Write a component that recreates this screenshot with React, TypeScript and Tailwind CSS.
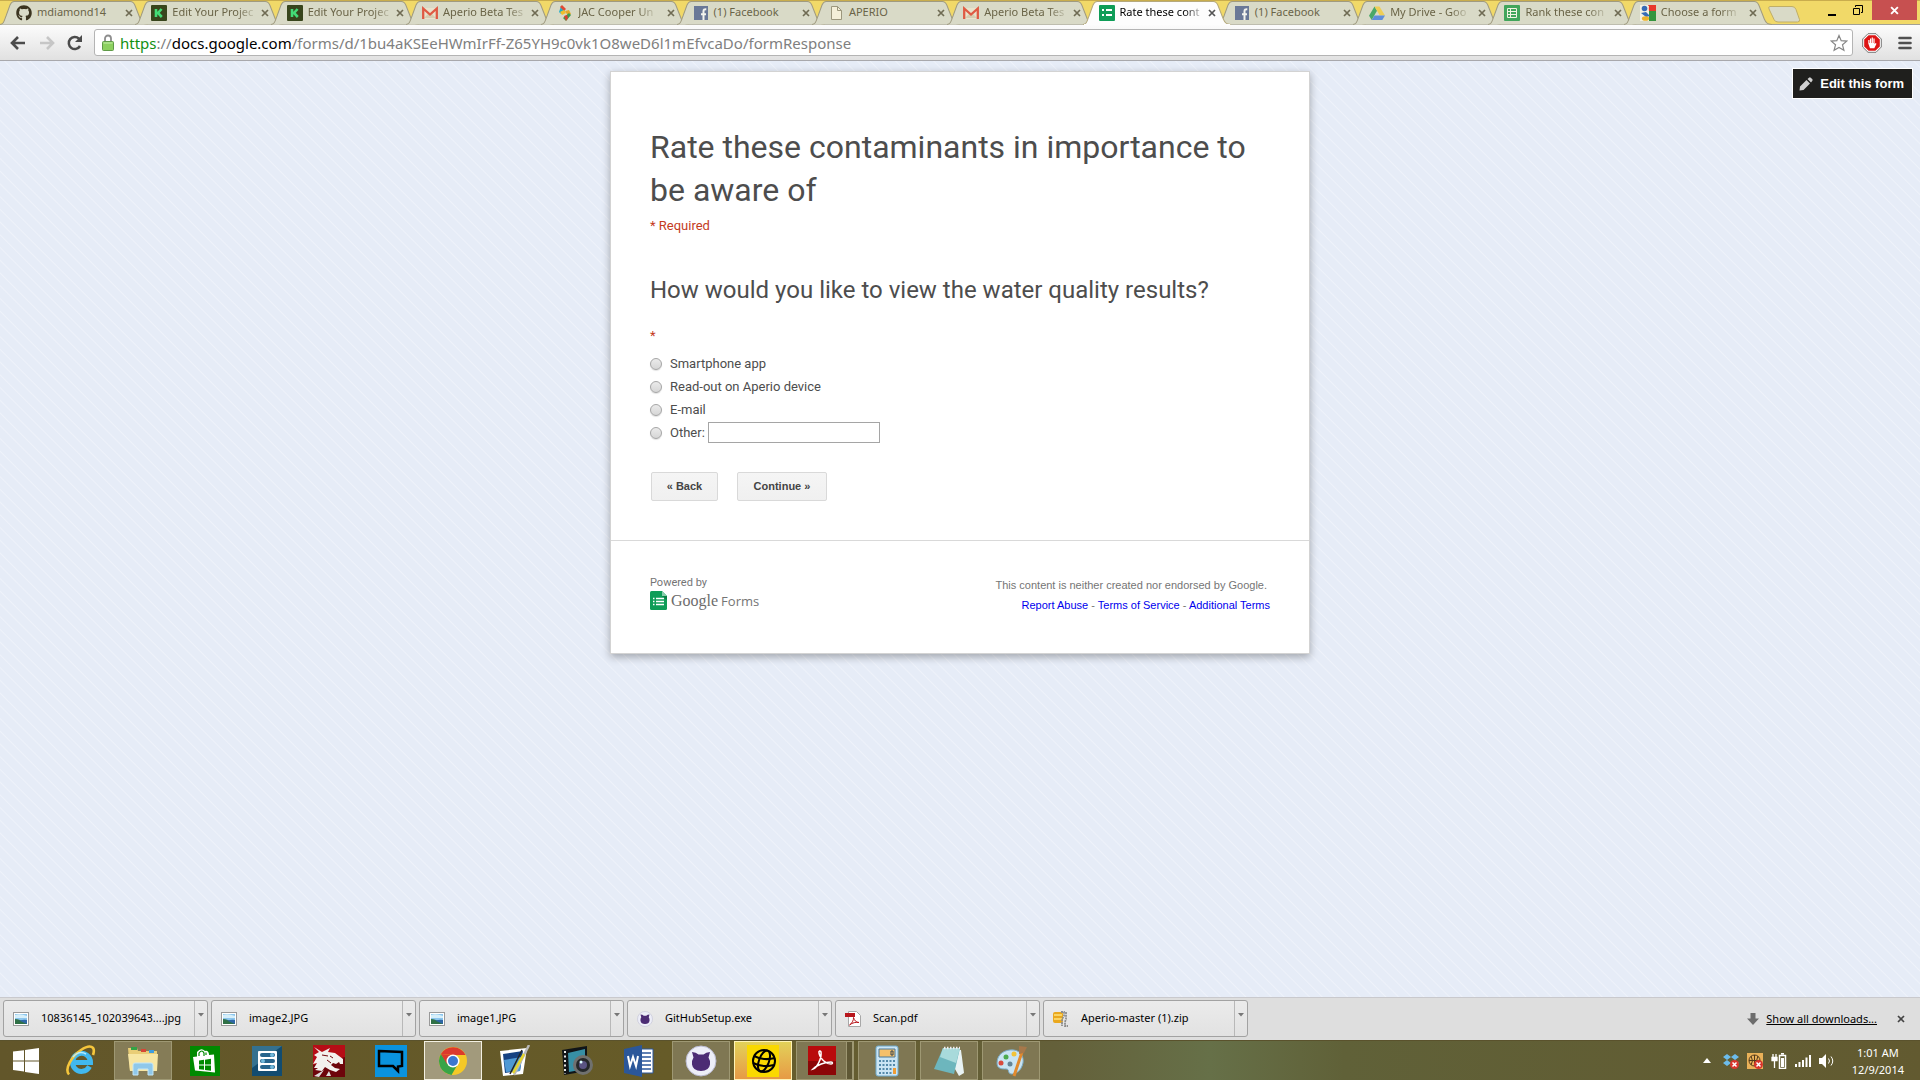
import React from "react";
import { FaGithub } from "react-icons/fa";

type IconProps = { className?: string };
type Svg = (p: IconProps) => React.ReactElement;

const Kick: Svg = () => (
  <svg viewBox="0 0 16 16" className="size-4"><rect width="16" height="16" rx="1" fill="#38451c" /><path d="M5 4v8M10.600 4 7 8l3.800 4" stroke="#43dc76" strokeWidth="2.600" fill="none" /></svg>
);
const Gmail: Svg = () => (
  <svg viewBox="0 0 16 16" className="size-4"><path d="M1 3h14v11H1z" fill="#e9e3cb" /><path d="m2 13 5-5h2l5 5" fill="#d5cdb0" /><path d="M1.200 14V3.500L8 9.500l6.800-6V14" stroke="#df5a43" strokeWidth="2.300" fill="none" /></svg>
);
const Jac: Svg = () => (
  <svg viewBox="0 0 16 16" className="size-4"><path d="M4 1 8 5 4 9 2 7z" fill="#26b0c9" /><path d="m5 0 4 4-2 2-4-4z" fill="#e04a34" /><path d="m3 7 4-2 2 3-4 2z" fill="#f0bf2c" /><path d="m8 6 4-1 2 4-3 2z" fill="#e5a92c" /><path d="m12 8 2 2-5 6-3-3z" fill="#3e9c50" /><path d="m7 11 3-1 1 3-2 3z" fill="#d84332" /></svg>
);
const Fb: Svg = () => (
  <svg viewBox="0 0 16 16" className="size-4"><rect x="1" y="1" width="14" height="14" fill="#6a7897" /><path d="M10.500 15V9.500M8 9.200h5M10.500 10V6.200c0-1.500.7-2 2.800-1.900" stroke="#f4f4ee" strokeWidth="2" fill="none" /></svg>
);
const Doc: Svg = () => (
  <svg viewBox="0 0 16 16" className="size-4"><path d="M3.500 1.500h6l4 4v9h-10z" fill="#f4efd8" stroke="#9c977d" /><path d="M9.500 1.500v4h4" fill="none" stroke="#9c977d" /></svg>
);
const FormsTab: Svg = () => (
  <svg viewBox="0 0 16 16" className="size-4"><rect width="16" height="16" rx="1" fill="#0f9d58" /><path d="M3 5h2M3 10h2M7 5h6M7 10h6" stroke="#fff" strokeWidth="2" /></svg>
);
const Drive: Svg = () => (
  <svg viewBox="0 0 16 16" className="size-4"><path d="M5.500 1.500 0 10.800 2.700 15 8 5.800z" fill="#4aa868" /><path d="M5.500 1.500h5L16 10.500h-5.200z" fill="#efce55" /><path d="M5.500 10.500H16L13.300 15H2.700z" fill="#5f8edb" /></svg>
);
const Sheet: Svg = () => (
  <svg viewBox="0 0 16 16" className="size-4"><rect width="16" height="16" rx="1" fill="#41a55b" /><path d="M3.500 3.500h9v9h-9zM3.500 6.500h9M3.500 9.500h9M6.500 3.500v9" stroke="#f1f3e3" fill="none" /></svg>
);
const GoogleOld: Svg = () => (
  <svg viewBox="0 0 16 16" className="size-4"><rect width="16" height="16" fill="#f4f1e2" /><path d="M8 0h8v6H9z" fill="#e8392d" /><path d="M9 6h7v10H9z" fill="#35953f" /><path d="M2 0h4l3 1-1 6 1 3-1 6H3z" fill="#f4f1e2" /><circle cx="4.500" cy="3.500" r="2.800" fill="#376cb5" /><path d="m1 8 5-1 4 4-4 1z" fill="#376cb5" /><ellipse cx="5.500" cy="13.500" rx="3.600" ry="2.300" fill="#edb32c" /></svg>
);
const Octo: Svg = () => <FaGithub className="size-4" color="#3b3420" />;

const tabs: { title: string; Icon: Svg; active?: boolean; fade?: boolean }[] = [
  { title: "mdiamond14", Icon: Octo },
  { title: "Edit Your Projec", Icon: Kick, fade: true },
  { title: "Edit Your Projec", Icon: Kick, fade: true },
  { title: "Aperio Beta Tes", Icon: Gmail, fade: true },
  { title: "JAC Cooper Un", Icon: Jac, fade: true },
  { title: "(1) Facebook", Icon: Fb },
  { title: "APERIO", Icon: Doc },
  { title: "Aperio Beta Tes", Icon: Gmail, fade: true },
  { title: "Rate these cont", Icon: FormsTab, active: true, fade: true },
  { title: "(1) Facebook", Icon: Fb },
  { title: "My Drive - Goo", Icon: Drive, fade: true },
  { title: "Rank these con", Icon: Sheet, fade: true },
  { title: "Choose a form", Icon: GoogleOld, fade: true },
];

function Cross({ className }: IconProps) {
  return <svg viewBox="0 0 8 8" className={className}><path d="m1 1 6 6M7 1 1 7" stroke="currentColor" strokeWidth="1.700" /></svg>;
}

function TabStrip() {
  return (
    <div className="flex h-6 border-t border-[#c9ad4d] bg-[#f1d968]">
      <div className="flex min-w-0 flex-1">
        {tabs.map(({ title, Icon, active, fade }, i) => (
          <div key={i} className={active ? "relative z-10 min-w-0 flex-1" : "relative min-w-0 flex-1"}>
            <svg viewBox="0 0 148 24" preserveAspectRatio="none" className="absolute top-0 left-0 h-6 w-[calc(100%+13px)]">
              <path d="M0 23.500C4 23 4 20 6 15L10 4Q11.500.5 14 .5H130Q133 .5 134.500 4L140 18C142 23 144 23 148 23.500" fill={active ? "#fdfdfd" : "#d9dac7"} stroke={active ? "#b5a97c" : "#a09b80"} />
              {active && <path d="M1 24H147" stroke="#fdfdfd" strokeWidth="2" />}
            </svg>
            <div className="relative flex h-[23px] items-center justify-between pl-4">
              <div className="flex items-center gap-[5px]">
                <Icon />
                <span className={`font-['Noto_Sans'] text-[11px] whitespace-nowrap ${active ? "text-black" : "text-[#6a6447]"} ${fade ? "[mask-image:linear-gradient(to_right,black_80%,rgba(0,0,0,0.25))]" : ""}`}>{title}</span>
              </div>
              <button aria-label={`Close ${title}`} className={`flex w-3 shrink-0 justify-center ${active ? "text-[#555]" : "text-[#6f6b53]"}`}><Cross className="size-2" /></button>
            </div>
          </div>
        ))}
      </div>
      <button aria-label="New tab" className="ml-[9px] w-8 shrink-0">
        <svg viewBox="0 0 32 22" className="h-[22px] w-8"><path d="M2 4.500h22q3 0 4 3l3.500 10q.5 2.500-2 2.500H10q-3 0-4-2.500L1 7q-1-2.500 1-2.500z" fill="#d9dac7" stroke="#c0ae66" /></svg>
      </button>
      <div className="ml-4 flex w-[104px] shrink-0 items-start">
        <button aria-label="Minimize" className="flex h-[19px] w-7 items-center justify-end pt-2 pr-2"><span className="h-0.5 w-2 bg-black" /></button>
        <button aria-label="Restore" className="flex h-[17px] w-7 items-center justify-center">
          <svg viewBox="0 0 10 10" className="size-[10px]"><path d="M.5 3.500h6v6h-6zM2.500 2V.5h7v7H8" stroke="#000" fill="none" /></svg>
        </button>
        <button aria-label="Close" className="-mt-px flex h-5 w-[45px] items-center justify-center bg-[#c75050] text-white"><Cross className="size-[9px]" /></button>
      </div>
    </div>
  );
}

function Toolbar() {
  return (
    <div className="flex h-[37px] items-center border-t border-b border-t-[#a3a194] border-b-[#a8a8ac] bg-linear-to-b from-[#fcfcfc] to-[#e1e1e1] pr-2">
      <button aria-label="Back" className="ml-2.5 w-[29px]"><svg viewBox="0 0 16 14" className="h-[14px] w-4"><path d="M15 7H2M8 1 2 7l6 6" stroke="#4b4b4b" strokeWidth="2.600" fill="none" /></svg></button>
      <button aria-label="Forward" className="w-[28px]"><svg viewBox="0 0 16 14" className="h-[14px] w-4"><path d="M1 7h13M8 1l6 6-6 6" stroke="#c6c6c6" strokeWidth="2.600" fill="none" /></svg></button>
      <button aria-label="Reload" className="w-[27px]"><svg viewBox="0 0 16 16" className="size-4"><path d="M13 11A6 6 0 1 1 12 3.700" stroke="#4b4b4b" strokeWidth="2.500" fill="none" /><path d="M15 0v7H8z" fill="#4b4b4b" /></svg></button>
      <div className="flex h-[27px] min-w-0 flex-1 items-center rounded-[3px] border border-[#b4b4b4] bg-white pr-1 pl-[7px]">
        <svg viewBox="0 0 12 17" className="h-[17px] w-3 shrink-0"><path d="M3 8V4.500a3 3 0 0 1 6 0V8" stroke="#8d8d8d" strokeWidth="1.800" fill="none" /><rect x=".5" y="7.500" width="11" height="9" rx="1" fill="#8cd05f" stroke="#5f9a48" /><path d="M1.500 9h9" stroke="#c6efae" /></svg>
        <div className="ml-1.5 min-w-0 flex-1 font-['Noto_Sans'] text-[15px] leading-6 whitespace-nowrap text-[#808080]">
          <span className="text-[#129012]">https</span>://<span className="text-black">docs.google.com</span>/forms/d/1bu4aKSEeHWmIrFf-Z65YH9c0vk1O8weD6l1mEfvcaDo/formResponse
        </div>
        <button aria-label="Bookmark"><svg viewBox="0 0 18 18" className="size-[18px]"><path d="m9 1.500 2.200 5.200 5.600.4-4.300 3.700 1.400 5.500L9 13.400l-4.900 2.900 1.400-5.500L1.200 7.100l5.600-.4z" fill="#fff" stroke="#868686" strokeWidth="1.200" /></svg></button>
      </div>
      <button aria-label="Ad blocker" className="ml-[9px]"><svg viewBox="0 0 20 20" className="size-5"><path d="M6 .7h8L19.300 6v8L14 19.300H6L.7 14V6z" fill="#fff" stroke="#777" /><path d="M6.600 2.200h6.800l4.400 4.400v6.800l-4.400 4.400H6.600l-4.400-4.400V6.600z" fill="#dd1414" /><path d="M6.300 10.500V7h1.200v3h.5V5.500h1.200V10h.5V4.500h1.200V10h.5V5.500h1.200V11l1-1 .9.800-2.200 4.400H8z" fill="#fff" /></svg></button>
      <button aria-label="Menu" className="ml-4"><svg viewBox="0 0 14 14" className="size-[14px]"><path d="M1.500 2h11M1.500 7h11M1.500 12h11" stroke="#505050" strokeWidth="2.600" strokeLinecap="round" /></svg></button>
    </div>
  );
}

const options = ["Smartphone app", "Read-out on Aperio device", "E-mail"];
const radioClass = "size-3 shrink-0 appearance-none rounded-full border border-[#a5a5a5] bg-linear-to-b from-[#ebebeb] to-[#d6d6d6] shadow-[0_1px_1px_rgba(0,0,0,0.12)]";
const formButton = "h-[29px] rounded-[2px] border border-[#d9d9d9] bg-linear-to-b from-[#f5f5f5] to-[#f0f0f0] font-['Liberation_Sans'] text-[11px] font-bold text-[#444]";

function FormCard() {
  return (
    <form className="mx-auto w-[700px] max-w-full border border-[#d3d3d3] bg-white font-[Roboto] text-[13px] text-[#4d4d4d] shadow-[0_3px_8px_rgba(0,0,0,0.3)]" onSubmit={(e) => e.preventDefault()}>
      <div className="px-[39px] pt-[54px] pb-[39px]">
        <h1 className="text-[32px] leading-[43px]">Rate these contaminants in importance to be aware of</h1>
        <p className="mt-1 leading-5 text-[#c43b1d]">* Required</p>
        <h2 className="mt-[38px] text-2xl leading-8">How would you like to view the water quality results?</h2>
        <fieldset className="mt-5">
          <legend className="leading-5 text-[#c43b1d]" aria-label="Required question">*</legend>
          <div className="mt-1.5">
            {options.map((o) => (
              <label key={o} className="flex h-[23px] items-center gap-2"><input type="radio" name="view" className={radioClass} />{o}</label>
            ))}
            <div className="flex h-[23px] items-center">
              <label className="flex items-center gap-2"><input type="radio" name="view" className={radioClass} />Other:</label>
              <input type="text" aria-label="Other" className="ml-[3px] h-[21px] w-[172px] border border-[#a5a5a5] bg-white px-1" />
            </div>
          </div>
        </fieldset>
        <div className="mt-[28px] flex gap-[19px] pl-px">
          <button type="button" className={`${formButton} w-[67px]`}>« Back</button>
          <button type="submit" className={`${formButton} w-[90px]`}>Continue »</button>
        </div>
      </div>
      <div className="flex justify-between border-t border-[#d9d9d9] px-[39px] pt-[34px] pb-[38px] font-['Liberation_Sans'] text-[11px] text-[#757575]">
        <div>
          <p className="font-[Roboto] leading-4">Powered by</p>
          <a href="#forms" className="flex h-[19px] items-center">
            <svg viewBox="0 0 17 19" className="h-[19px] w-[17px]"><path d="M1.500 0H12l5 5v12.500q0 1.500-1.500 1.500h-14Q0 19 0 17.500v-16Q0 0 1.500 0z" fill="#0f9d58" /><path d="M12 0l5 5h-5z" fill="#87ceac" /><path d="M12 5h5v4z" fill="#0a7f45" /><path d="M3 7.500h1.500M3 10.500h1.500M3 13.500h1.500M6 7.500h8M6 10.500h8M6 13.500h8" stroke="#fff" strokeWidth="1.300" /></svg>
            <span className="ml-1 font-['Liberation_Serif'] text-base leading-5 text-[#6c6c6c]">Google</span>
            <span className="ml-[3px] font-['Open_Sans'] text-[13px] leading-5 text-[#757575]">Forms</span>
          </a>
        </div>
        <div className="text-right leading-5">
          <p className="pr-[3px]">This content is neither created nor endorsed by Google.</p>
          <p><a href="#abuse" className="text-[#0000ee]">Report Abuse</a> - <a href="#terms" className="text-[#0000ee]">Terms of Service</a> - <a href="#additional" className="text-[#0000ee]">Additional Terms</a></p>
        </div>
      </div>
    </form>
  );
}

const Photo: Svg = () => (
  <svg viewBox="0 0 16 16" className="size-4"><rect x=".5" y="1.500" width="15" height="13" fill="#fff" stroke="#999" /><path d="M2 3h12v10H2z" fill="#8cc6ee" /><path d="M2 4q5-2 12 1v2H2z" fill="#d6effa" /><path d="M2 8q4 0 12 4v1H2z" fill="#2f7046" /><path d="M6 9.500q5-1 8-.5v4z" fill="#2e66a6" /></svg>
);
const CatShape = "M8.500 9.500 7 4q4 0 6.500 2.500h5Q21 4 25 4l-1.500 5.500q2 3 1.500 7-1 6.500-9 6.500t-9-6.500q-.5-4 1.500-7z";
const Cat: Svg = ({ className = "size-4" }) => (
  <svg viewBox="0 0 32 32" className={className}><circle cx="16" cy="16" r="15" fill="#edeef8" stroke="#b9b9cf" /><path transform="translate(0 3)" d={CatShape} fill="#4c2c74" /></svg>
);
const Pdf: Svg = () => (
  <svg viewBox="0 0 16 16" className="size-4"><path d="M3.500.5h8l4 4v11h-12z" fill="#fff" stroke="#a8a8a8" /><path d="M0 2h10v4H0z" fill="#b8161c" /><path d="M4.500 14c2-1 4.500-5 4-7.500 1 3 2.500 5 5.500 5-3-.5-6.500 0-9.500 2.500z" stroke="#b8161c" fill="none" /></svg>
);
const Zip: Svg = () => (
  <svg viewBox="0 0 16 16" className="size-4"><rect y="1" width="10" height="11" rx="2" fill="#eaa81e" /><path d="M1 4h8M1 8h8" stroke="#ffe27b" strokeWidth="1.500" /><path d="M8 1h3v4L9 8v7M13 1v7l-1 3v4h3" stroke="#8d8d8d" strokeWidth="1.800" strokeDasharray="2 .7" fill="none" /></svg>
);

const downloads: { name: string; Icon: Svg }[] = [
  { name: "10836145_102039643....jpg", Icon: Photo },
  { name: "image2.JPG", Icon: Photo },
  { name: "image1.JPG", Icon: Photo },
  { name: "GitHubSetup.exe", Icon: Cat },
  { name: "Scan.pdf", Icon: Pdf },
  { name: "Aperio-master (1).zip", Icon: Zip },
];

function Downloads() {
  return (
    <div className="flex h-[43px] items-start gap-[3px] border-t border-[#c9c9cd] bg-[#dedede] pt-0.5 pr-[15px] pl-[3px] font-['Noto_Sans'] text-[11px] text-black">
      {downloads.map(({ name, Icon }) => (
        <div key={name} className="flex h-[37px] w-[205px] items-stretch rounded-[3px] border border-[#a2a2a2] bg-linear-to-b from-[#ebebeb] to-[#e2e2e2]">
          <button className="flex min-w-0 flex-1 items-center gap-3 pl-[9px] whitespace-nowrap"><Icon />{name}</button>
          <button aria-label={`Options for ${name}`} className="flex w-[13px] justify-center border-l border-[#b8b8b8] pt-3"><svg viewBox="0 0 6 4" className="h-1 w-1.5"><path d="M0 0h6L3 3.500z" fill="#777" /></svg></button>
        </div>
      ))}
      <div className="ml-auto flex h-[38px] items-center">
        <svg viewBox="0 0 12 12" className="size-3"><path d="M3.500 0h5v5.500H12L6 12 0 5.500h3.500z" fill="#6c6c6c" /></svg>
        <a href="#downloads" className="ml-[7px] underline">Show all downloads...</a>
        <button aria-label="Close downloads bar" className="ml-5 text-[#444]"><Cross className="size-2" /></button>
      </div>
    </div>
  );
}

const s32 = "size-8";
const apps: { name: string; frame?: string; icon: React.ReactElement }[] = [
  { name: "Internet Explorer", icon: <svg viewBox="0 0 32 32" className={s32}><path d="M24.500 21.500A9 9 0 1 1 25.500 17.500H8" stroke="#41b8ee" strokeWidth="5" fill="none" /><path d="M4 29.500C-1 24 7 11 16 5s15-4 12 5" stroke="#f5c63c" strokeWidth="2.600" fill="none" /><path d="M8 12q6-7 13-3" stroke="#b4e9ff" strokeWidth="1.500" fill="none" /></svg> },
  { name: "File Explorer", frame: "border-[#9e9873] bg-[#857c57]", icon: <svg viewBox="0 0 32 32" className={s32}><path d="M1 3h9l1 3h19v20H3z" fill="#e9cd76" /><path d="M4 2h6v3H4z" fill="#32a345" /><path d="M14 4h5v3h-5z" fill="#d74635" /><path d="M22 5h5v3h-5z" fill="#3e9ee0" /><path d="M1 9h30l-1 17H3z" fill="#f7e6a3" /><path d="M6 30V20q0-2 2-2h16q2 0 2 2v10h-5v-6H11v6z" fill="#8fc8ea" stroke="#c4e7f8" /></svg> },
  { name: "Store", icon: <svg viewBox="0 0 32 32" className={s32}><path d="M1 1h30v30H1z" fill="#008a00" /><path d="m4 12 4-.4V7q4-5 8-1 3-1 4 3v1l5-.5 1 18-20-2z" fill="#fff" /><path d="M10 11V8q3-4 5 0v3M17 10V7.500" stroke="#008a00" strokeWidth="1.200" fill="none" /><path d="m10 15.500 5-.7v4.700h-5zM16 14.700l6-.9v5.700h-6zM10 20.500h5v4.300l-5-.5zM16 20.500h6v5.200l-6-.8z" fill="#008a00" /></svg> },
  { name: "Settings panel", icon: <svg viewBox="0 0 32 32" className={s32}><path d="M1 1h30v30H1z" fill="#124c70" /><path d="M1 1h30L1 23z" fill="#34718f" /><rect x="7" y="6" width="19" height="20" rx="1" fill="#fff" /><rect x="9" y="8" width="15" height="4" rx="2" fill="#26648c" /><circle cx="21" cy="10" r="2" fill="#72b9db" /><rect x="9" y="14" width="15" height="4" rx="2" fill="#26648c" /><circle cx="12" cy="16" r="2" fill="#72b9db" /><rect x="9" y="20" width="15" height="4" rx="2" fill="#26648c" /><circle cx="21" cy="22" r="2" fill="#72b9db" /></svg> },
  { name: "Dragon", icon: <svg viewBox="0 0 32 32" className={s32}><path d="M0 0h32v32H0z" fill="#b60d16" /><path d="M0 20 32 12v20H0z" fill="#6d050b" /><path d="m1 2 8 5 8-4-2 4 7 1 8 6 0 5-3 0-1-2-3 2-3-1-2 2 4 3 5 1-4 3-6-2-5-3-3 4-7-1 3-2-4 0 3-5-4 1 4-7-3-2 5-3z" fill="#f3f1ee" /><path d="m9 10 6 1M17 11l3 2M14 15l4 3" stroke="#70080d" /><path d="m1 31 10-6-5 7zM13 31l3-5 2 5" fill="#ddd" /></svg> },
  { name: "Chat", icon: <svg viewBox="0 0 32 32" className={s32}><path d="M0 0h32v32H0z" fill="#0a93de" /><path d="m4 6 23 1v14l-4 .5V26l-5-5H4z" stroke="#000" strokeWidth="2.500" fill="none" /></svg> },
  { name: "Chrome", frame: "border-[#f3f0e2] bg-[#a29a7c]", icon: <svg viewBox="0 0 32 32" className={s32}><circle cx="16" cy="16" r="14" fill="#f5c927" /><path d="M3.900 9A14 14 0 0 1 28.500 10H16z" fill="#dc3a2d" /><path d="M3.900 9A14 14 0 0 0 14.500 30l7-12-11 0z" fill="#38a447" /><path d="M3.900 9 10 19l6-9z" fill="#dc3a2d" /><circle cx="16" cy="16" r="6.500" fill="#fff" /><circle cx="16" cy="16" r="5" fill="#3c77cf" /></svg> },
  { name: "Image editor", icon: <svg viewBox="0 0 32 32" className={s32}><path d="m1 6 27-3-4 26-20 2z" fill="#fff" /><path d="m4 9 20-3-3 20-15 2z" fill="#164282" /><path d="m5 15 18-3-2 14-14 1z" fill="#4f99d4" /><path d="M30 0 15 30" stroke="#b9b9b9" strokeWidth="2.500" /><path d="m25 9-11 19" stroke="#e5d42f" strokeWidth="2.500" /><path d="M23 5 11 29" stroke="#252525" strokeWidth="1.500" /></svg> },
  { name: "Camera", icon: <svg viewBox="0 0 32 32" className={s32}><path d="m1 5 25-4v25L3 30z" fill="#101418" /><path d="m7 8 17-4v20L8 27z" fill="#378fa5" /><path d="M4 6v23" stroke="#e7e7e7" strokeWidth="2" strokeDasharray="2 2.500" /><circle cx="22" cy="20" r="10" fill="#70716f" /><circle cx="22" cy="20" r="7" fill="#25282a" /><circle cx="22" cy="20" r="4" fill="#5a5482" /><circle cx="20" cy="17" r="1.500" fill="#dff" /></svg> },
  { name: "Word", icon: <svg viewBox="0 0 32 32" className={s32}><path d="M17 4h13v24H17z" fill="#fff" stroke="#2b579a" /><path d="M19 8h9M19 12h9M19 16h9M19 20h9M19 24h9" stroke="#2b579a" strokeWidth="1.500" /><path d="m1 4 18-4v32L1 28z" fill="#2b579a" /><path d="m5 11 2 10 3-9 3 9 2-10" stroke="#fff" strokeWidth="2" fill="none" /></svg> },
  { name: "GitHub", frame: "border-[#9e9873] bg-[#7f7753]", icon: <Cat className={s32} /> },
  { name: "Network", frame: "border-[#fff3b5] bg-linear-to-b from-[#e2d159] to-[#e69a45]", icon: <svg viewBox="0 0 32 32" className={s32}><path d="M0 0h32v32H0z" fill="#fad900" /><g stroke="#000" strokeWidth="2" fill="none"><circle cx="17" cy="16" r="11" /><ellipse cx="17" cy="16" rx="5" ry="11" transform="rotate(20 17 16)" /><path d="M7 11q10 5 21 2M6 18q10 5 21 2" /></g></svg> },
  { name: "Adobe Reader", frame: "border-[#9e9873] bg-[#7f7753] pr-1.5", icon: <svg viewBox="0 0 32 32" className={s32}><path d="M2 1h28v29H2z" fill="#b90b0c" /><path d="M2 16h28v14H2z" fill="#8c0607" /><path d="M7 24c4-1 9-11 8-17-.5-2-2.500-1-2 1 1 6 7 11 12 11 2 0 2-2 0-2-6 0-14 3-18 7z" stroke="#fff" strokeWidth="1.500" fill="none" /></svg> },
  { name: "Calculator", frame: "border-[#9e9873] bg-[#7f7753]", icon: <svg viewBox="0 0 32 32" className={s32}><rect x="5" y="1" width="22" height="30" rx="2" fill="#cbe5f4" stroke="#6faacb" /><path d="M8 4h16v8H8z" fill="#f6c06a" stroke="#4b7898" /><path d="M20 6h2v4h-2z" stroke="#345" fill="none" /><path d="M8 16h16M8 20h16M8 24h13M8 28h13" stroke="#5489aa" strokeWidth="2" strokeDasharray="2 1.500" /><path d="M22 23h3v6h-3z" fill="#ef9c34" /></svg> },
  { name: "Notepad", frame: "border-[#9e9873] bg-[#7f7753]", icon: <svg viewBox="0 0 32 32" className={s32}><path d="m10 3 18 2 3 23-5 3z" fill="#e9f3f4" /><path d="M10 3h17l-6 26L1 24z" fill="#6db6bd" /><path d="M10 3h17l-4 15-16-6z" fill="#a8dadb" /><path d="M11 3h16" stroke="#eee" strokeWidth="2.500" strokeDasharray="1.500 1.500" /></svg> },
  { name: "Paint", frame: "border-[#9e9873] bg-[#7f7753]", icon: <svg viewBox="0 0 32 32" className={s32}><path d="M2 18C2 9 10 4 19 5c7 1 10 7 9 13-2 9-8 11-12 11-4-1-1-5-5-5s-9 0-9-6z" fill="#c9e4f3" stroke="#79a9c5" /><circle cx="6" cy="18" r="2.500" fill="#d94a3e" /><circle cx="11" cy="12" r="2.500" fill="#4cab50" /><circle cx="19" cy="9" r="2.500" fill="#f2c338" /><circle cx="15" cy="19" r="2.500" fill="#648598" /><path d="M27 7 19 31" stroke="#e28a2e" strokeWidth="3" /><path d="m24 1 8 1-3 6-5 1z" fill="#a7784a" /></svg> },
];

function Taskbar() {
  return (
    <div className="flex h-10 items-stretch border-t border-[#5a522c] bg-[linear-gradient(90deg,#62562a_0%,#665b28_35%,#64603a_55%,#667048_63%,#606138_70%,#625a30_100%)]">
      <button aria-label="Start" className="flex w-[52px] items-center justify-center">
        <svg viewBox="0 0 26 26" className="size-[26px]"><path d="m0 3.500 11-1.300v10.300H0zM12 2l14-2v12.500H12zM0 13.500h11v10L0 22zM12 13.500h14V26l-14-2z" fill="#fff" /></svg>
      </button>
      <div className="flex gap-1">
        {apps.map((a) => (
          <button key={a.name} aria-label={a.name} className={`relative flex w-[58px] items-center justify-center border ${a.frame ?? "border-transparent"}`}>
            {a.icon}
            {a.name === "Adobe Reader" && <span className="absolute inset-y-0 right-0 w-[7px] border-x border-[#9e9873] bg-[#5f5835]" />}
          </button>
        ))}
      </div>
      <div className="ml-auto flex items-center pr-4 text-white">
        <svg viewBox="0 0 8 5" className="h-[5px] w-2"><path d="m4 0 4 5H0z" fill="#fff" /></svg>
        <svg viewBox="0 0 16 16" className="ml-3 size-4"><path d="m4 1 4 3-4 3-4-3zM12 1l4 3-4 3-4-3zM4 7l4 3-4 3-4-3zM12 7l4 3-4 3-4-3z" fill="#6cbcec" /><circle cx="11.500" cy="11.500" r="4.500" fill="#d8352c" /><path d="m9.500 9.500 4 4m0-4-4 4" stroke="#fff" strokeWidth="1.500" /></svg>
        <svg viewBox="0 0 16 16" className="ml-2 size-4"><path d="M0 0h16v16H0z" fill="#eab158" /><g stroke="#523a1a" fill="none"><circle cx="7.500" cy="7.500" r="5.500" /><path d="M2 7.500h11M7.500 2v11M4 3q3 5 0 9m7-9q-3 5 0 9" /></g><circle cx="11.500" cy="11.500" r="4.500" fill="#d8352c" /><path d="m9.500 9.500 4 4m0-4-4 4" stroke="#fff" strokeWidth="1.500" /></svg>
        <svg viewBox="0 0 16 16" className="ml-2 size-4"><path d="M8.500 2.500h6v13h-6zM10 .8h3" stroke="#fff" strokeWidth="1.500" fill="none" /><path d="M10 5h3v9h-3z" fill="#fff" /><path d="M2 1v3m3-3v3M1 4.500h5v3H1zM3.500 7v8" stroke="#fff" strokeWidth="1.300" fill="#fff" /></svg>
        <svg viewBox="0 0 16 12" className="ml-2 h-3 w-4"><path d="M0 9h2v3H0zM3.500 7h2v5h-2zM7 5h2v7H7zM10.500 2.500h2V12h-2zM14 0h2v12h-2z" fill="#fff" /></svg>
        <svg viewBox="0 0 16 16" className="ml-2 size-4"><path d="M0 5h3l4-4v14l-4-4H0z" fill="#fff" /><path d="M9.500 5.500q2 2.500 0 5M12 3.500q3.500 4.500 0 9" stroke="#fff" fill="none" /></svg>
        <div className="ml-[17px] text-center font-['Noto_Sans'] text-[11px] leading-[17px]"><p>1:01 AM</p><p>12/9/2014</p></div>
      </div>
    </div>
  );
}

export default function App() {
  return (
    <div className="flex min-h-screen flex-col">
      <TabStrip />
      <Toolbar />
      <main className="relative flex-1 bg-[#e6ecf7] bg-[repeating-linear-gradient(45deg,#e6ecf7_0px,#e6ecf7_7px,#eef2fa_8px,#e6ecf7_9px)] px-4 pt-[10px] pb-10">
        <FormCard />
        <a href="#edit" className="absolute top-[7px] right-[7px] flex h-[31px] items-center border border-white bg-[#1f1f1d] pr-2 pl-1.5 font-['Liberation_Sans'] text-[13px] font-bold text-white">
          <svg viewBox="0 0 14 14" className="mr-[7px] size-[14px]"><path d="M.5 13.500 1 9.500l6.500-6.500 3.500 3.500L4.500 13zM8.500 2 10 .7q1-.8 2 .2l1.200 1.200q.8 1 0 1.900L12 5.500z" fill="#d0d0d0" /></svg>
          Edit this form
        </a>
      </main>
      <Downloads />
      <Taskbar />
    </div>
  );
}
